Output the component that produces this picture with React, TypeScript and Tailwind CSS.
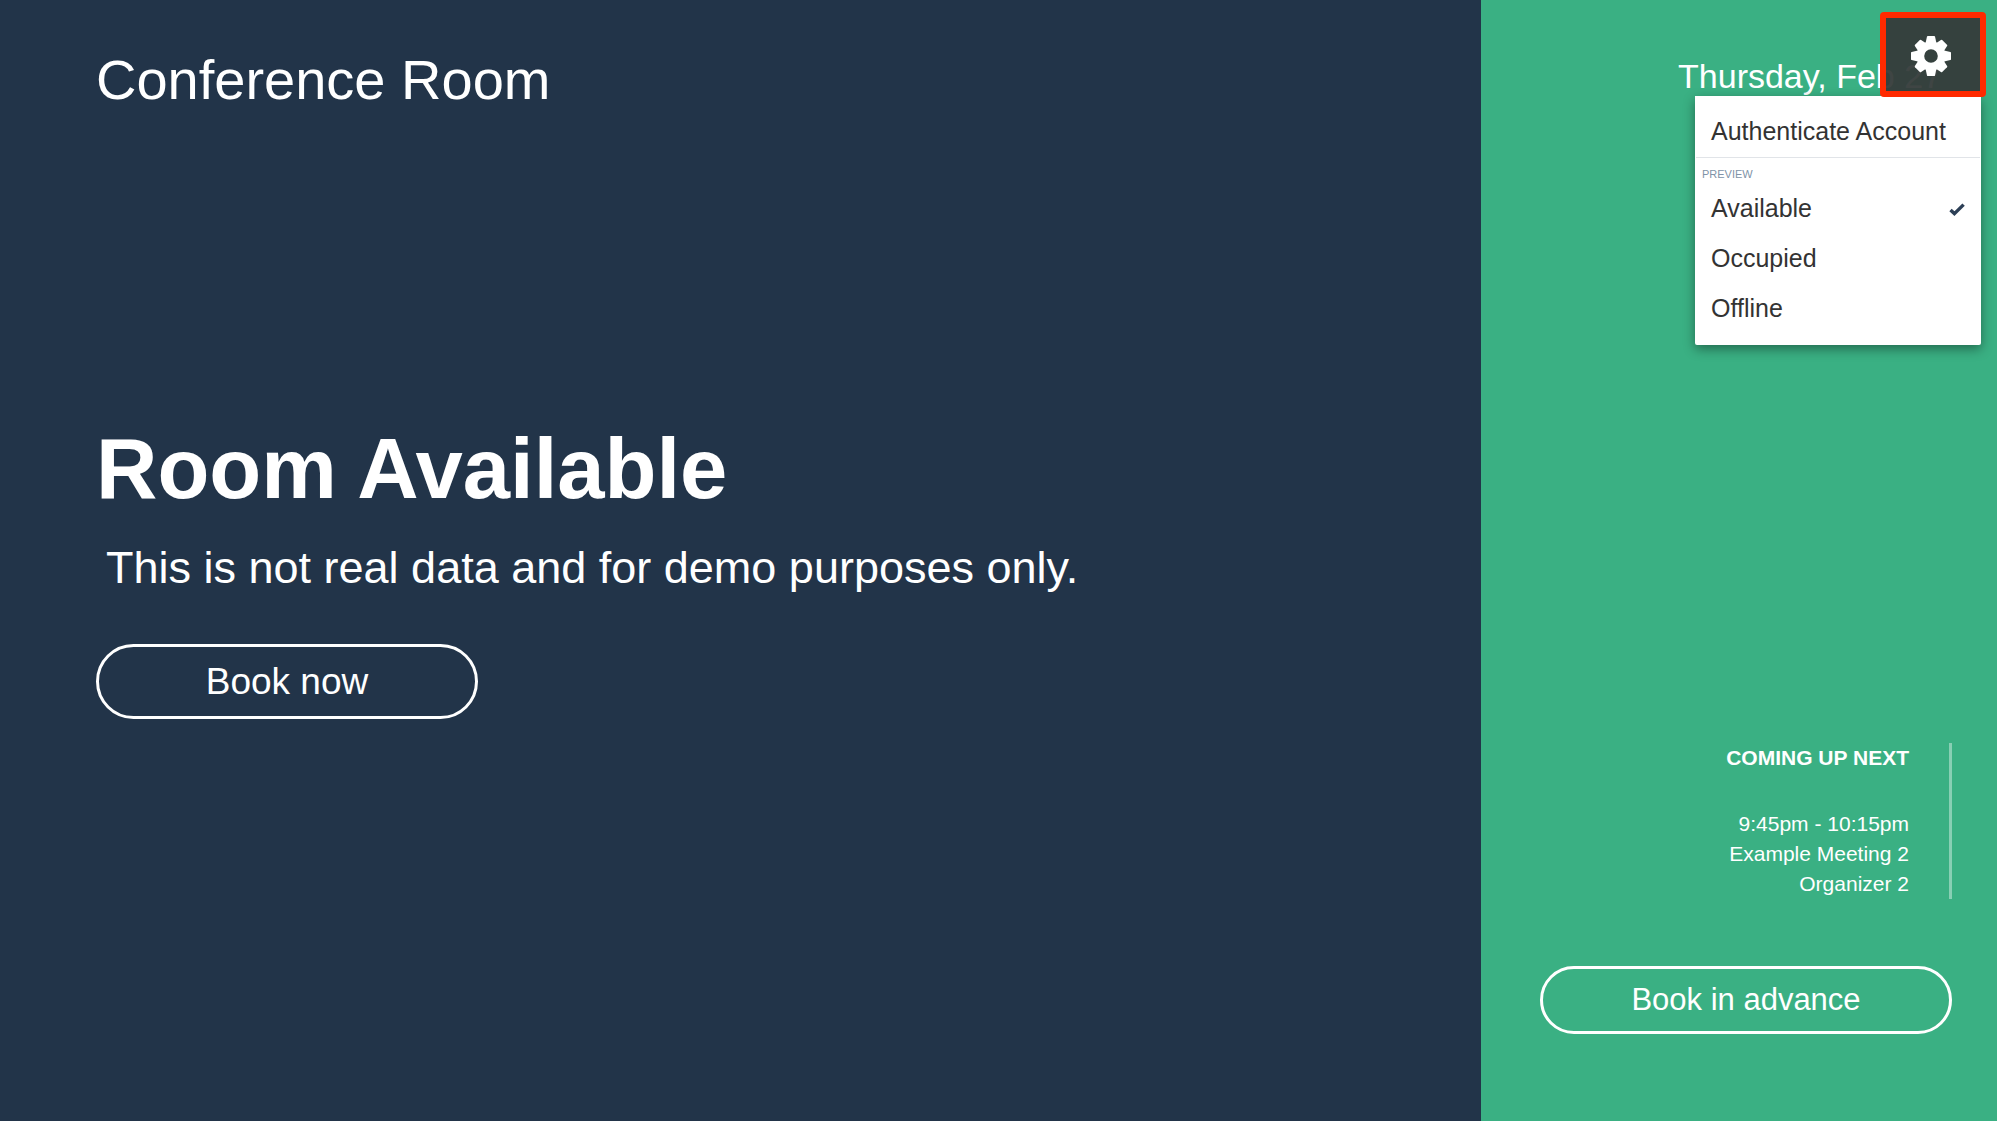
import { useState } from 'react';

const previewStates = ['Available', 'Occupied', 'Offline'];

const toothAngles = [0, 45, 90, 135, 180, 225, 270, 315];

function GearIcon() {
  return (
    <svg viewBox="-20 -20 40 40" className="size-10" fill="currentColor" aria-hidden="true">
      <path
        fillRule="evenodd"
        d="M0-14.4A14.4 14.4 0 1 1 0 14.4A14.4 14.4 0 1 1 0-14.4ZM0-6.8A6.8 6.8 0 1 0 0 6.8A6.8 6.8 0 1 0 0-6.8Z"
      />
      {toothAngles.map((angle) => (
        <path
          key={angle}
          d={angle % 90 === 0 ? 'M-5.4-13L-4-19.4Q-3.8-20-3.2-20H3.2Q3.8-20 4-19.4L5.4-13Z' : 'M-5.4-13L-4.4-18.4Q-4.2-19.2-3.4-19.2H3.4Q4.2-19.2 4.4-18.4L5.4-13Z'}
          transform={`rotate(${angle})`}
        />
      ))}
    </svg>
  );
}

function CheckIcon() {
  return (
    <svg viewBox="0 0 16 13" className="h-[13px] w-4" fill="none" stroke="currentColor" strokeWidth="3.4" aria-hidden="true">
      <path d="M1.5 7L5.4 10.6L14.6 1.6" />
    </svg>
  );
}

function SettingsMenu() {
  const [active, setActive] = useState('Available');
  return (
    <div className="absolute top-3 right-[11px] flex flex-col items-end">
      <button
        type="button"
        aria-label="Settings"
        aria-haspopup="menu"
        aria-expanded="true"
        className="relative z-10 -mb-px flex h-[85px] w-[106px] items-center justify-center rounded border-[6px] border-[#ff2a00] bg-[#353b3a]/95 pt-0.5 pr-1 text-white"
      >
        <GearIcon />
      </button>
      <div
        role="menu"
        className="mr-[5px] w-[286px] rounded-b-xs bg-white pt-2.5 pb-[11px] text-[25px] text-[#333333] shadow-[0_4px_12px_rgba(0,0,0,0.4)]"
      >
        <button type="button" role="menuitem" className="flex h-[51px] w-full items-center px-4 text-left whitespace-nowrap">
          Authenticate Account
        </button>
        <div className="mx-px border-t border-[#e1e4e8]" />
        <div className="px-[7px] pt-2 pb-0.5 text-[11px] leading-4 text-[#8093a7]">PREVIEW</div>
        {previewStates.map((state) => (
          <button
            key={state}
            type="button"
            role="menuitemradio"
            aria-checked={active === state}
            onClick={() => setActive(state)}
            className="flex h-[50px] w-full items-center justify-between px-4 text-left"
          >
            {state}
            {active === state && (
              <span className="text-[#2c3f56]">
                <CheckIcon />
              </span>
            )}
          </button>
        ))}
      </div>
    </div>
  );
}

export default function App() {
  return (
    <div className="relative grid min-h-screen grid-cols-[minmax(0,1fr)_516px] bg-[#223449] font-['Liberation_Sans',Arial,sans-serif] text-white">
      <main className="flex flex-col items-start pt-12 pl-24">
        <h1 className="text-[56px] leading-[64px]">Conference Room</h1>
        <h2 className="mt-[309px] text-[85px] leading-[96px] font-bold">Room Available</h2>
        <p className="mt-[19px] pl-2.5 text-[45px] leading-[64px]">This is not real data and for demo purposes only.</p>
        <button type="button" className="mt-11 h-[75px] w-[382px] rounded-full border-[3px] border-white text-[37px]">
          Book now
        </button>
      </main>
      <aside className="flex flex-col bg-[#3ab083] pt-14 pr-[45px] pb-[87px] pl-[59px]">
        <div className="pr-2.5 text-right text-[34px] leading-10">Thursday, Feb 27</div>
        <section className="mt-auto border-r-[3px] border-white/40 pr-10 text-right text-[21px] leading-[30px]">
          <h3 className="font-bold">COMING UP NEXT</h3>
          <p className="mt-9">9:45pm - 10:15pm</p>
          <p>Example Meeting 2</p>
          <p>Organizer 2</p>
        </section>
        <button type="button" className="mt-[67px] h-[68px] w-full rounded-full border-[3px] border-white text-[31px]">
          Book in advance
        </button>
      </aside>
      <SettingsMenu />
    </div>
  );
}
